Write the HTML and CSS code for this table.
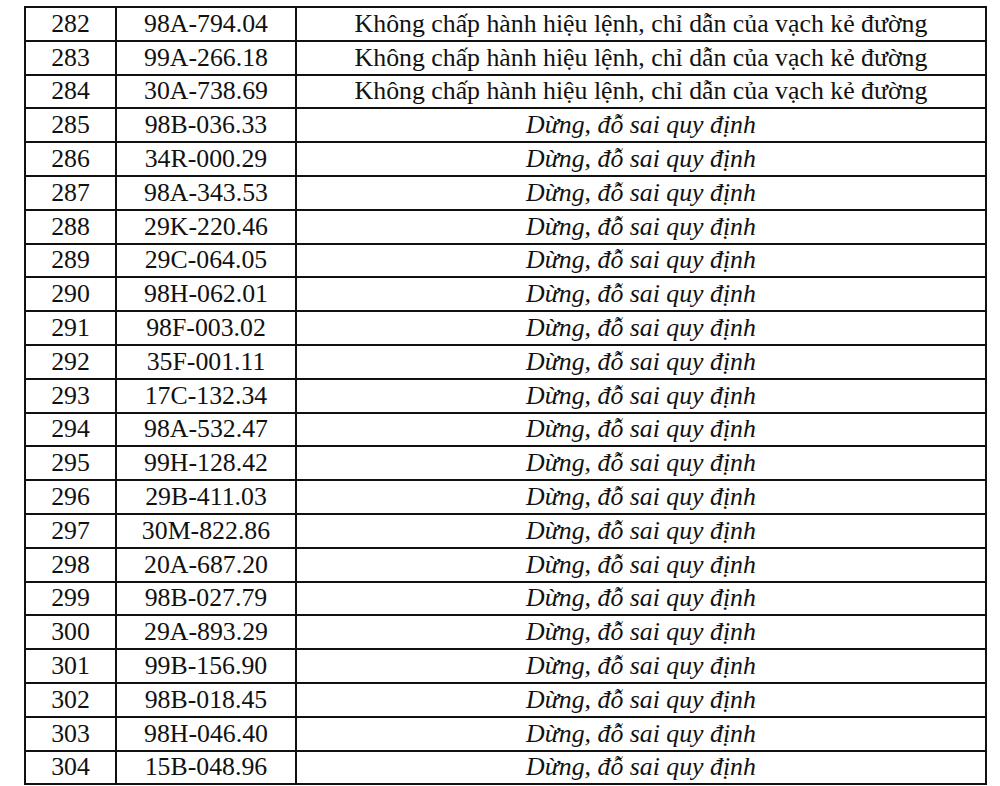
FILE: index.html
```html
<!DOCTYPE html>
<html lang="vi">
<head>
<meta charset="utf-8">
<link rel="stylesheet" href="styles.css">
</head>
<body>
<table class="list">
<colgroup><col class="c-no"><col class="c-plate"><col class="c-err"></colgroup>
<tbody>
<tr><td>282</td><td>98A-794.04</td><td class="err">Không chấp hành hiệu lệnh, chỉ dẫn của vạch kẻ đường</td></tr>
<tr><td>283</td><td>99A-266.18</td><td class="err">Không chấp hành hiệu lệnh, chỉ dẫn của vạch kẻ đường</td></tr>
<tr><td>284</td><td>30A-738.69</td><td class="err">Không chấp hành hiệu lệnh, chỉ dẫn của vạch kẻ đường</td></tr>
<tr><td>285</td><td>98B-036.33</td><td class="err it">Dừng, đỗ sai quy định</td></tr>
<tr><td>286</td><td>34R-000.29</td><td class="err it">Dừng, đỗ sai quy định</td></tr>
<tr><td>287</td><td>98A-343.53</td><td class="err it">Dừng, đỗ sai quy định</td></tr>
<tr><td>288</td><td>29K-220.46</td><td class="err it">Dừng, đỗ sai quy định</td></tr>
<tr><td>289</td><td>29C-064.05</td><td class="err it">Dừng, đỗ sai quy định</td></tr>
<tr><td>290</td><td>98H-062.01</td><td class="err it">Dừng, đỗ sai quy định</td></tr>
<tr><td>291</td><td>98F-003.02</td><td class="err it">Dừng, đỗ sai quy định</td></tr>
<tr><td>292</td><td>35F-001.11</td><td class="err it">Dừng, đỗ sai quy định</td></tr>
<tr><td>293</td><td>17C-132.34</td><td class="err it">Dừng, đỗ sai quy định</td></tr>
<tr><td>294</td><td>98A-532.47</td><td class="err it">Dừng, đỗ sai quy định</td></tr>
<tr><td>295</td><td>99H-128.42</td><td class="err it">Dừng, đỗ sai quy định</td></tr>
<tr><td>296</td><td>29B-411.03</td><td class="err it">Dừng, đỗ sai quy định</td></tr>
<tr><td>297</td><td>30M-822.86</td><td class="err it">Dừng, đỗ sai quy định</td></tr>
<tr><td>298</td><td>20A-687.20</td><td class="err it">Dừng, đỗ sai quy định</td></tr>
<tr><td>299</td><td>98B-027.79</td><td class="err it">Dừng, đỗ sai quy định</td></tr>
<tr><td>300</td><td>29A-893.29</td><td class="err it">Dừng, đỗ sai quy định</td></tr>
<tr><td>301</td><td>99B-156.90</td><td class="err it">Dừng, đỗ sai quy định</td></tr>
<tr><td>302</td><td>98B-018.45</td><td class="err it">Dừng, đỗ sai quy định</td></tr>
<tr><td>303</td><td>98H-046.40</td><td class="err it">Dừng, đỗ sai quy định</td></tr>
<tr><td>304</td><td>15B-048.96</td><td class="err it">Dừng, đỗ sai quy định</td></tr>
</tbody>
</table>
</body>
</html>
```
FILE: styles.css
```css
html, body {
  margin: 0;
  padding: 0;
  background: #ffffff;
}
body {
  padding: 6px 0 0 24px;
  font-family: "Liberation Serif", "Times New Roman", serif;
  color: #111111;
}
.list {
  border-collapse: collapse;
  table-layout: fixed;
  width: 961px;
  font-size: 25.8px;
}
.c-no { width: 91px; }
.c-plate { width: 180px; }
.c-err { width: 690px; }
.list td {
  border: 2px solid #111111;
  height: 31.8px;
  padding: 0;
  text-align: center;
  vertical-align: middle;
  line-height: 30px;
  white-space: nowrap;
}
.list td.it {
  font-style: italic;
}
```
